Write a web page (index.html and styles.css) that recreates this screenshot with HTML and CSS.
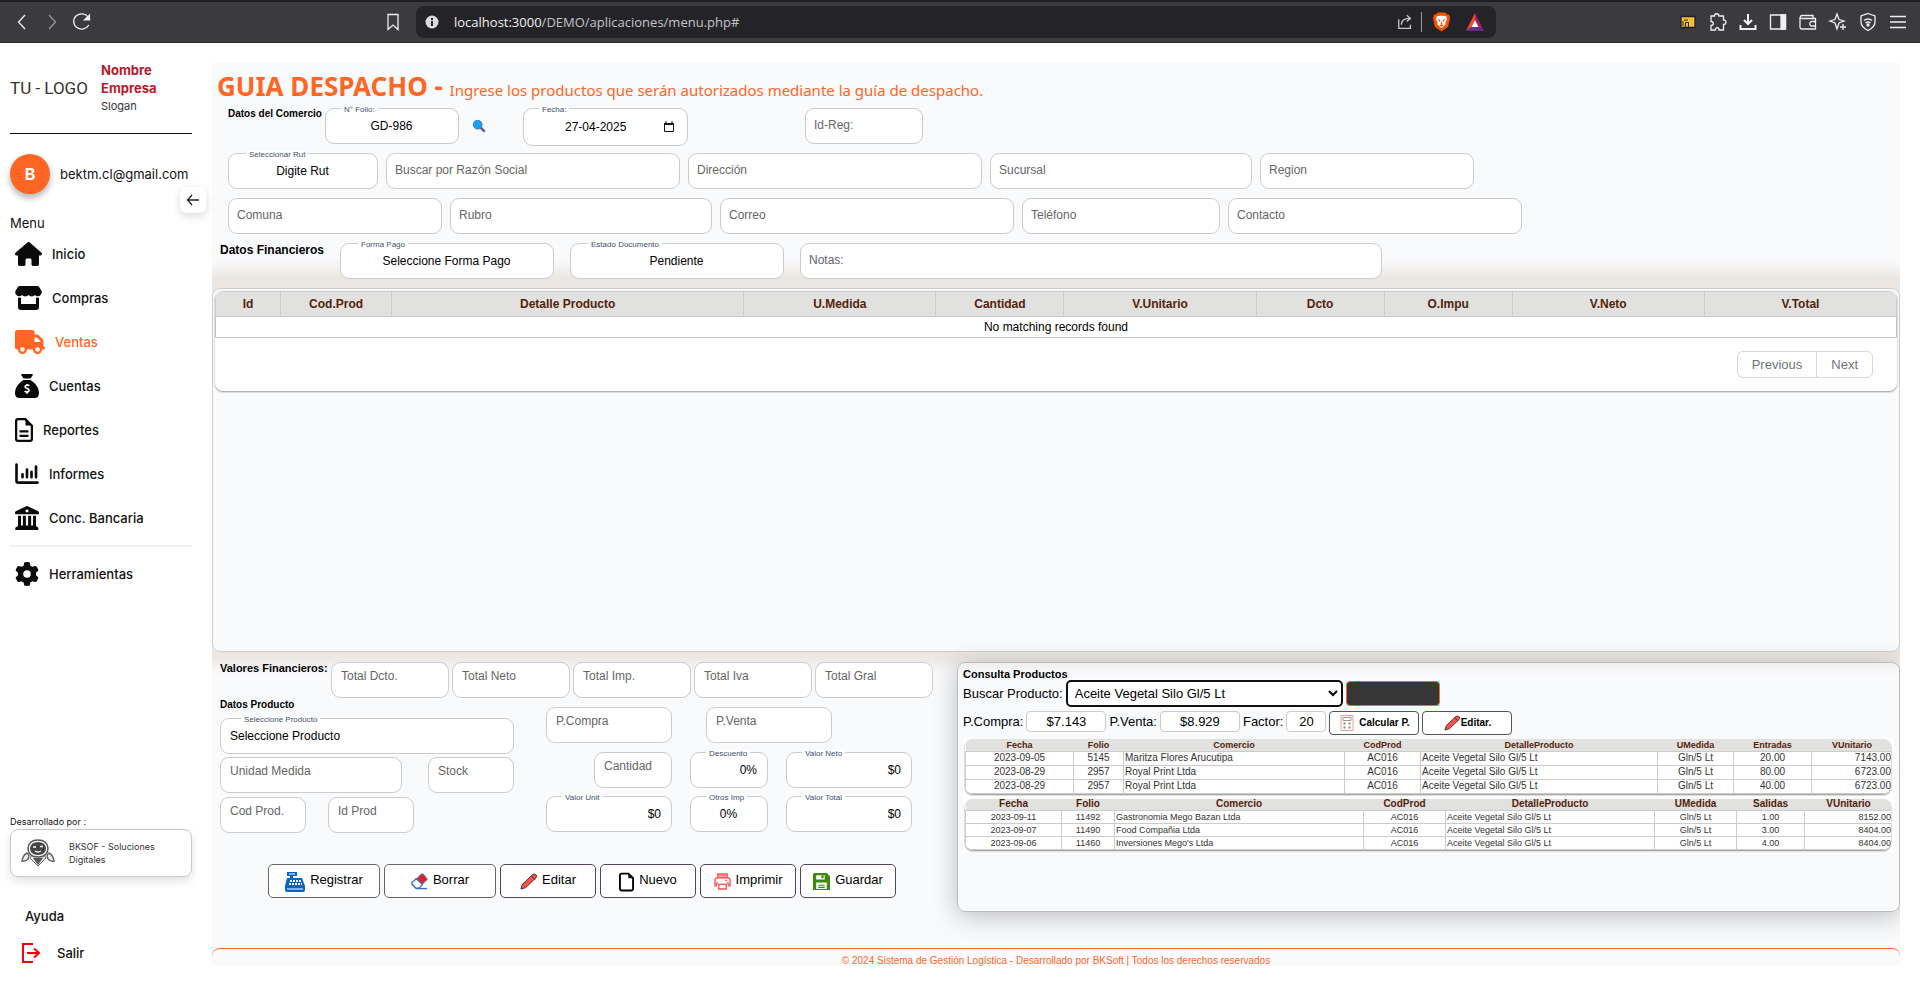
FILE: index.html
```html
<!doctype html>
<html lang="es">

	<head>
		<title>Guia Despacho</title>
		<meta charset="utf-8" />
		<link rel="stylesheet" href="styles.css">
	</head>

	<body>

		<header class="topbar">
			<button type="button" aria-label="Atrás"><svg viewBox="0 0 20 20"><path d="M13 3L6.500 10L13 17" /></svg></button>
			<button type="button" class="dim" aria-label="Adelante"><svg viewBox="0 0 20 20"><path d="M7 3L13.500 10L7 17" /></svg></button>
			<button type="button" aria-label="Recargar"><svg viewBox="0 0 20 20"><path d="M16.500 5.500A8 7.600 0 1 0 16.800 13" /><path d="M12.500 7.800h5V3z" class="fill" /></svg></button>
			<button type="button" class="bookmark" aria-label="Marcador"><svg viewBox="0 0 20 20"><path d="M5 2.500h10v15l-5-4.500l-5 4.500z" /></svg></button>
			<div class="urlbar">
				<svg class="info" viewBox="0 0 14 14"><circle cx="7" cy="7" r="6.500" /><path d="M6 6h2v5H6zM6 3h2v2H6z" class="hole" /></svg>
				<span class="url">localhost:3000<span>/DEMO/aplicaciones/menu.php#</span></span>
				<svg class="share" viewBox="0 0 20 20"><path d="M3 7v10h13v-4M6 13c0-5 3-7 9-7M12 2.500L16 6L12 9.500" /></svg>
				<i class="sep"></i>
				<svg class="brave" viewBox="0 0 18 20"><path d="M5 0h8l2 2h2l1 4l-2 9l-7 5l-7-5L0 6l1-4h2z" fill="#ff5000" /><path d="M4 4l3-.5h4l3 .500l1 3l-2 3.500l.5 2l-4.500 4l-4.500-4l.5-2L3 7z" fill="#fff" /><path d="M5 7l3 1l-1 2zM13 7l-3 1l1 2zM9 9l1 3H8zM6.500 13.500L9 12.500l2.500 1L9 15z" fill="#ff5000" /></svg>
				<svg class="bat" viewBox="0 0 18 18"><path d="M9 0L0 18l5.500-4L9 7z" fill="#ff4724" /><path d="M9 0l9 18l-5.500-4L9 7z" fill="#9e1f63" /><path d="M0 18h18l-5.500-4h-7z" fill="#662d91" /><path d="M9 7l3.500 7h-7z" fill="#fff" /></svg>
			</div>
			<button type="button" aria-label="Extensión"><svg viewBox="0 0 20 20"><path d="M3 4.500h14v11H3z" fill="#f2c230" stroke="#222" /><path d="M5 14V9M7.500 15v-4.500h3V15M6 8h4" stroke="#222" stroke-width="1" /></svg></button>
			<button type="button" aria-label="Extensiones"><svg viewBox="0 0 20 20"><path d="M3 4h3.500c-.5-2.500 4-3.500 4.500 0h4.500v4c3-.500 3.500 4.500 0 4.500V18H11c.5-3-4-3-3.500 0H3v-4.500c3 0 3-4 0-4z" /></svg></button>
			<button type="button" aria-label="Descargas"><svg viewBox="0 0 20 20" class="bold"><path d="M10 2v9M6 8l4 4l4-4M2.500 13v4h15v-4" /></svg></button>
			<button type="button" aria-label="Panel lateral"><svg viewBox="0 0 20 20"><path d="M2.500 3h15v14h-15z" /><path d="M13 3h4.500v14H13z" class="fill" /></svg></button>
			<button type="button" aria-label="Cartera"><svg viewBox="0 0 20 20"><path d="M15 6V3.500H4C1.500 4 2 6.500 4 6.500h13.500V17H4q-2 0-2-2V5M17.500 9.500H13q-2.500 2 0 4.500h4.500" /></svg></button>
			<button type="button" aria-label="Leo"><svg viewBox="0 0 20 20"><path d="M9 2l2 5.500L16 9l-5 2l-2 6l-2-6l-5-2l5-1.500zM15 12v6M12 15h6" /></svg></button>
			<button type="button" aria-label="VPN"><svg viewBox="0 0 20 20"><path d="M10 1.500L17 4v6c0 4-3 6.500-7 8.500C6 16.500 3 14 3 10V4zM6 8.500q4-3 8 0M7.500 11q2.500-2 5 0" /><circle cx="10" cy="13" r="1" class="fill" /></svg></button>
			<button type="button" aria-label="Menú"><svg viewBox="0 0 20 20"><path d="M2 4.500h16M2 10h16M2 15.500h16" /></svg></button>
		</header>

		<div class="layout">

			<nav class="sidebar">
				<div class="brand">
					<span class="logo">TU - LOGO</span>
					<p>
						<strong>Nombre Empresa</strong>
						<small>Slogan</small>
					</p>
				</div>
				<div class="user">
					<span class="avatar">B</span>
					<span>bektm.cl@gmail.com</span>
					<button type="button" class="toggle" aria-label="Ocultar menú"><svg viewBox="0 0 14 14"><path d="M13 7H1.500M6 2L1.500 7L6 12" /></svg></button>
				</div>
				<p class="menu-title">Menu</p>
				<ul class="menu">
					<li><a href="#"><svg viewBox="0 0 576 512"><path d="M575.8 255.5c0 18-15 32.100-32 32.100h-32l.7 160.200c0 2.700-.2 5.400-.5 8.100V472c0 22.100-17.900 40-40 40H392c-22.100 0-40-17.900-40-40V384c0-17.700-14.300-32-32-32H256c-17.700 0-32 14.300-32 32v88c0 22.100-17.900 40-40 40H104c-22.100 0-40-17.900-40-40V287.600H32c-18 0-32-14-32-32.100c0-9 3-17 10-24L266.400 8c7-7 15-8 22-8s15 2 21 7L564.800 231.500c8 7 12 15 11 24z" /></svg>Inicio</a></li>
					<li><a href="#"><svg viewBox="0 0 576 512"><path d="M92 0h392q18 0 28 16l48 78c38 62-20 132-80 126q-32-4-54-28q-26 30-69 30t-69-30q-26 30-69 30t-69-30q-22 24-54 28C36 226-22 156 16 94l48-78Q74 0 92 0z" /><path d="M64 246q32 10 64-2v140h320V244q32 12 64 2v202q0 64-64 64H128q-64 0-64-64z" /></svg>Compras</a></li>
					<li><a href="#" class="active"><svg viewBox="0 0 640 512"><path d="M48 0C21.500 0 0 21.500 0 48V368c0 26.500 21.500 48 48 48H64c0 53 43 96 96 96s96-43 96-96H384c0 53 43 96 96 96s96-43 96-96h32c17.700 0 32-14.300 32-32s-14.300-32-32-32V237.300c0-17-6.700-33.300-18.700-45.300L512 114.700c-12-12-28.300-18.700-45.300-18.700H416V48c0-26.500-21.500-48-48-48H48zM416 160h50.700L544 237.300V256H416V160zM112 416a48 48 0 1 1 96 0 48 48 0 1 1 -96 0zm368-48a48 48 0 1 1 0 96 48 48 0 1 1 0-96z" /></svg>Ventas</a></li>
					<li><a href="#"><svg viewBox="0 0 512 512"><path d="M144 0h224q20 8 10 26l-48 70H182l-48-70q-10-18 10-26zM182 128h148c24 16 182 110 182 280q0 104-104 104H104Q0 512 0 408C0 238 158 144 182 128z" /><path d="M306 248c-20-14-86-22-90 20c-4 48 88 28 84 80c-4 44-70 38-96 18M256 212v36M256 384v36" class="cut" /></svg>Cuentas</a></li>
					<li><a href="#"><svg viewBox="0 0 384 512"><path d="M64 24h156l140 140v284q0 40-40 40H64q-40 0-40-40V64q0-40 40-40z" class="sheet-line" /><path d="M224 10v150h150zM96 260h192v48H96zM96 356h192v48H96z" /></svg>Reportes</a></li>
					<li><a href="#"><svg viewBox="0 0 512 512"><path d="M32 56v344q0 40 40 40h408" class="line" /><path d="M160 260v64M256 160v164M352 208v116M448 96v228" class="line" /></svg>Informes</a></li>
					<li><a href="#"><svg viewBox="0 0 512 512"><path d="M240 4q16-7 32 0l224 108q16 8 16 24v24q0 16-16 16H16q-16 0-16-16v-24q0-16 16-24zM256 72a32 32 0 1 0 1 0zM64 208h64v208h40V208h64v208h48V208h64v208h40V208h64v216l44 36q12 12 4 52H8q-8-36 4-52l52-36z" /></svg>Conc. Bancaria</a></li>
					<li class="tools"><a href="#"><svg viewBox="0 0 512 512"><path d="M495.900 166.600c3.200 8.700 .5 18.400-6.400 24.600l-43.300 39.400c1.100 8.300 1.700 16.800 1.700 25.400s-.6 17.100-1.700 25.400l43.300 39.400c6.900 6.200 9.600 15.900 6.400 24.600c-4.400 11.900-9.700 23.300-15.800 34.300l-4.700 8.100c-6.600 11-14 21.400-22.100 31.200c-5.900 7.200-15.700 9.600-24.500 6.800l-55.700-17.700c-13.400 10.300-28.200 18.900-44 25.400l-12.500 57.100c-2 9.100-9 16.300-18.200 17.800c-13.800 2.300-28 3.500-42.500 3.500s-28.700-1.200-42.500-3.500c-9.200-1.500-16.200-8.700-18.200-17.800l-12.500-57.100c-15.800-6.500-30.600-15.100-44-25.400L83.100 425.900c-8.800 2.800-18.600 .3-24.500-6.800c-8.100-9.800-15.500-20.200-22.100-31.200l-4.700-8.100c-6.100-11-11.400-22.400-15.800-34.300c-3.200-8.700-.5-18.400 6.400-24.600l43.300-39.400C64.600 273.100 64 264.600 64 256s.6-17.100 1.700-25.400L22.400 191.200c-6.900-6.200-9.600-15.900-6.400-24.600c4.400-11.900 9.700-23.300 15.800-34.300l4.700-8.100c6.600-11 14-21.400 22.100-31.200c5.900-7.200 15.700-9.600 24.500-6.800l55.700 17.700c13.400-10.300 28.200-18.900 44-25.400l12.500-57.100c2-9.100 9-16.300 18.200-17.800C227.300 1.200 241.500 0 256 0s28.700 1.200 42.500 3.500c9.200 1.500 16.200 8.700 18.200 17.800l12.500 57.100c15.800 6.500 30.600 15.100 44 25.400l55.700-17.700c8.800-2.800 18.600-.3 24.500 6.800c8.100 9.800 15.500 20.200 22.100 31.200l4.700 8.100c6.100 11 11.400 22.400 15.800 34.300zM256 336a80 80 0 1 0 0-160 80 80 0 1 0 0 160z" /></svg>Herramientas</a></li>
				</ul>

				<div class="side-foot">
					<p class="by">Desarrollado por :</p>
					<a href="#" class="dev">
						<svg viewBox="0 0 34 28">
							<path d="M11 16l-2 3l8 8l8-8l-2-3z" fill="#eee" stroke="#666" />
							<path d="M12 19h10l-5 7z" fill="#555" />
							<path d="M7 9Q8 1 17 1T27 9Q27 18 17 18T7 9z" fill="#fff" stroke="#555" stroke-width="1.500" />
							<path d="M9 9q1-6 8-6t8 6q0 7-8 7t-8-7z" fill="#444" />
							<path d="M12 8h3M19 7.500h3M14 12q3 2 6 0" stroke="#fff" stroke-width="1.500" fill="none" />
							<path d="M6 14q-4 2-5 8q3 1 6-2q2-4-1-6zM28 14q4 2 5 8q-3 1-6-2q-2-4 1-6z" fill="#eee" stroke="#666" stroke-width="1.500" />
						</svg>
						<span>BKSOF - Soluciones Digitales</span>
					</a>
					<a href="#" class="help">Ayuda</a>
					<a href="#" class="exit"><svg viewBox="0 0 18 20"><path d="M11 1H1v18h10M5 10h12M12 5.500L17 10L12 14.500" /></svg>Salir</a>
				</div>
			</nav>

			<main class="main">
				<h1>GUIA DESPACHO - <span>Ingrese los productos que serán autorizados mediante la guía de despacho.</span></h1>

				<form class="head">
					<div class="row">
						<b class="tag-commerce">Datos del Comercio</b>
						<div class="field w134"><label for="folio">N° Folio:</label><input id="folio" class="center" value="GD-986"></div>
						<button type="button" class="search" aria-label="Buscar folio"><svg viewBox="0 0 16 16"><path d="M9 9l5.500 5.500" stroke="#5b5ea6" stroke-width="3" /><circle cx="6.500" cy="6.500" r="5" fill="#12a5f4" stroke="#3c6fc4" /></svg></button>
						<div class="field w165 date"><label for="fecha">Fecha:</label><input id="fecha" value="27-04-2025"><svg viewBox="0 0 12 12"><path d="M1.500 2.500h9v8h-9z" /><path d="M1 2h10v2H1zM2.500 0h1v2h-1zM8.500 0h1v2h-1z" class="fill" /></svg></div>
						<div class="field w118 reg"><input aria-label="Id-Reg" placeholder="Id-Reg:"></div>
					</div>
					<div class="row">
						<div class="field w150"><label for="rut">Seleccionar Rut</label><select id="rut" class="center"><option>Digite Rut</option></select></div>
						<div class="field w294"><input aria-label="Razón Social" placeholder="Buscar por Razón Social"></div>
						<div class="field w294"><input aria-label="Dirección" placeholder="Dirección"></div>
						<div class="field w262"><input aria-label="Sucursal" placeholder="Sucursal"></div>
						<div class="field w214"><input aria-label="Region" placeholder="Region"></div>
					</div>
					<div class="row">
						<div class="field w214"><input aria-label="Comuna" placeholder="Comuna"></div>
						<div class="field w262"><input aria-label="Rubro" placeholder="Rubro"></div>
						<div class="field w294"><input aria-label="Correo" placeholder="Correo"></div>
						<div class="field w198"><input aria-label="Teléfono" placeholder="Teléfono"></div>
						<div class="field w294"><input aria-label="Contacto" placeholder="Contacto"></div>
					</div>
					<div class="row pay">
						<b class="tag-finance">Datos Financieros</b>
						<div class="field w214"><label for="forma">Forma Pago</label><select id="forma" class="center"><option>Seleccione Forma Pago</option></select></div>
						<div class="field w214"><label for="estado">Estado Documento</label><select id="estado" class="center"><option>Pendiente</option></select></div>
						<div class="field w582"><input aria-label="Notas" placeholder="Notas:"></div>
					</div>
				</form>

				<section class="detail">
					<div class="detail-card">
						<table>
							<colgroup>
								<col class="c4"><col class="c7"><col class="c21"><col class="c12"><col class="c8"><col class="c12"><col class="c8"><col class="c8"><col class="c12"><col class="c12">
							</colgroup>
							<thead>
								<tr><th>Id</th><th>Cod.Prod</th><th>Detalle Producto</th><th>U.Medida</th><th>Cantidad</th><th>V.Unitario</th><th>Dcto</th><th>O.Impu</th><th>V.Neto</th><th>V.Total</th></tr>
							</thead>
							<tbody>
								<tr><td colspan="10">No matching records found</td></tr>
							</tbody>
						</table>
						<div class="pager">
							<button type="button">Previous</button><button type="button">Next</button>
						</div>
					</div>
				</section>

				<div class="bottom">
					<form class="product">
						<div class="totals">
							<b>Valores Financieros:</b>
							<div class="field w118"><input aria-label="Total Dcto" placeholder="Total Dcto."></div>
							<div class="field w118"><input aria-label="Total Neto" placeholder="Total Neto"></div>
							<div class="field w118"><input aria-label="Total Imp" placeholder="Total Imp."></div>
							<div class="field w118"><input aria-label="Total Iva" placeholder="Total Iva"></div>
							<div class="field w118"><input aria-label="Total Gral" placeholder="Total Gral"></div>
						</div>
						<div class="product-cols">
							<div class="item">
								<b>Datos Producto</b>
								<div class="field wide"><label for="producto">Seleccione Producto</label><select id="producto"><option>Seleccione Producto</option></select></div>
								<div class="line between">
									<div class="field w182"><input aria-label="Unidad Medida" placeholder="Unidad Medida"></div>
									<div class="field w86"><input aria-label="Stock" placeholder="Stock"></div>
								</div>
								<div class="line codes">
									<div class="field w86"><input aria-label="Cod Prod" placeholder="Cod Prod."></div>
									<div class="field w86"><input aria-label="Id Prod" placeholder="Id Prod"></div>
								</div>
							</div>
							<div class="prices">
								<div class="line buy">
									<div class="field w126"><input aria-label="P.Compra" placeholder="P.Compra"></div>
									<div class="field w126"><input aria-label="P.Venta" placeholder="P.Venta"></div>
								</div>
								<div class="line end">
									<div class="field w78"><input aria-label="Cantidad" placeholder="Cantidad"></div>
									<div class="field w78"><label for="desc">Descuento</label><input id="desc" class="right" value="0%"></div>
									<div class="field w126"><label for="neto">Valor Neto</label><input id="neto" class="right" value="$0"></div>
								</div>
								<div class="line end">
									<div class="field w126"><label for="unit">Valor Unit</label><input id="unit" class="right" value="$0"></div>
									<div class="field w78"><label for="otros">Otros Imp</label><input id="otros" class="center" value="0%"></div>
									<div class="field w126"><label for="total">Valor Total</label><input id="total" class="right" value="$0"></div>
								</div>
							</div>
						</div>
						<div class="actions">
							<button type="button" class="big"><svg class="till" viewBox="0 0 20 20"><path d="M2 0h10v4H8v2h9l3 8v4q0 2-2 2H2q-2 0-2-2v-4L2 6h3V4H2z" fill="#0a63c9" /><path d="M4 2h6M2 17h16" stroke="#fff" fill="none" /><path d="M5 9h11M4 12h13" stroke="#fff" stroke-width="2" stroke-dasharray="2 1" fill="none" /></svg>Registrar</button>
							<button type="button" class="big"><svg viewBox="0 0 18 18"><path d="M6 6l5-5h2l4 5v1l-5 5z" fill="#e02424" stroke="#3b82e0" /><path d="M5.500 6L12 12l-3 4H5l-4-4v-2z" fill="#fff" stroke="#3b6fd0" stroke-width="1.500" /><path d="M5 16.500h12" stroke="#3b6fd0" stroke-width="1.500" /></svg>Borrar</button>
							<button type="button"><svg viewBox="0 0 18 18"><path d="M1 17l1.500-5L13 2q2-2 4 0t0 3L6 15.500z" fill="#f4534e" stroke="#55282c" /><path d="M12 3l4 4" stroke="#55282c" /></svg>Editar</button>
							<button type="button"><svg class="doc" viewBox="0 0 16 20"><path d="M10 1H3Q1 1 1 3v14q0 2 2 2h10q2 0 2-2V6z" fill="#fff" stroke="#000" stroke-width="2" /><path d="M10 0v6h6z" /></svg>Nuevo</button>
							<button type="button"><svg viewBox="0 0 18 18"><path d="M4 5V1h10v4M3 13.500H1V8q0-3 3-3h10q3 0 3 3v5.500h-2M5 12h8v5H5zM5 3h8M12 8h2M4 10q-2 1-1 3M14 10q2 1 1 3" fill="none" stroke="#ff5555" stroke-width="1.500" /></svg>Imprimir</button>
							<button type="button"><svg viewBox="0 0 16 16"><path d="M1 0h12l3 3v13H0V1z" fill="#3f8a0d" /><path d="M3 2h8v4H3zM3 9h10v6H3z" fill="#fff" /><path d="M8 2h2v3H8zM5 11h6v1H5zM5 13h6v1H5z" fill="#3f8a0d" /></svg>Guardar</button>
						</div>
					</form>

					<section class="query">
						<h2>Consulta Productos</h2>
						<div class="query-row">
							<label for="buscar">Buscar Producto:</label>
							<select id="buscar"><option>Aceite Vegetal Silo Gl/5 Lt</option></select>
							<button type="button" class="dark" aria-label="Consultar"></button>
						</div>
						<div class="query-row second">
							<label for="pcompra">P.Compra:</label>
							<input id="pcompra" value="$7.143">
							<label for="pventa">P.Venta:</label>
							<input id="pventa" value="$8.929">
							<label for="factor">Factor:</label>
							<input id="factor" class="short" value="20">
							<button type="button"><svg class="calc" viewBox="0 0 13 16"><path d="M.5.500h12v15H.5z" fill="#fff" stroke="#f59a9a" /><path d="M2.500 2.500h8v3h-8z" fill="#fff" stroke="#999" /><path d="M3 8.500h2M8 8.500h2M3 12.500h2M8 12.500h2" stroke="#888" stroke-width="2" /></svg>Calcular P.</button>
							<button type="button" class="edit"><svg viewBox="0 0 18 18"><path d="M1 17l1.500-5L13 2q2-2 4 0t0 3L6 15.500z" fill="#f4534e" stroke="#55282c" /><path d="M12 3l4 4" stroke="#55282c" /></svg>Editar.</button>
						</div>
						<div class="moves">
							<div class="sheet in">
								<table>
									<thead>
										<tr><th>Fecha</th><th>Folio</th><th>Comercio</th><th>CodProd</th><th>DetalleProducto</th><th>UMedida</th><th>Entradas</th><th>VUnitario</th></tr>
									</thead>
									<tbody>
										<tr><td>2023-09-05</td><td>5145</td><td>Maritza Flores Arucutipa</td><td>AC016</td><td>Aceite Vegetal Silo Gl/5 Lt</td><td>Gln/5 Lt</td><td>20.00</td><td>7143.00</td></tr>
										<tr><td>2023-08-29</td><td>2957</td><td>Royal Print Ltda</td><td>AC016</td><td>Aceite Vegetal Silo Gl/5 Lt</td><td>Gln/5 Lt</td><td>80.00</td><td>6723.00</td></tr>
										<tr><td>2023-08-29</td><td>2957</td><td>Royal Print Ltda</td><td>AC016</td><td>Aceite Vegetal Silo Gl/5 Lt</td><td>Gln/5 Lt</td><td>40.00</td><td>6723.00</td></tr>
									</tbody>
								</table>
							</div>
							<div class="sheet out">
								<table>
									<thead>
										<tr><th>Fecha</th><th>Folio</th><th>Comercio</th><th>CodProd</th><th>DetalleProducto</th><th>UMedida</th><th>Salidas</th><th>VUnitario</th></tr>
									</thead>
									<tbody>
										<tr><td>2023-09-11</td><td>11492</td><td>Gastronomia Mego Bazan Ltda</td><td>AC016</td><td>Aceite Vegetal Silo Gl/5 Lt</td><td>Gln/5 Lt</td><td>1.00</td><td>8152.00</td></tr>
										<tr><td>2023-09-07</td><td>11490</td><td>Food Compañia Ltda</td><td>AC016</td><td>Aceite Vegetal Silo Gl/5 Lt</td><td>Gln/5 Lt</td><td>3.00</td><td>8404.00</td></tr>
										<tr><td>2023-09-06</td><td>11460</td><td>Inversiones Mego's Ltda</td><td>AC016</td><td>Aceite Vegetal Silo Gl/5 Lt</td><td>Gln/5 Lt</td><td>4.00</td><td>8404.00</td></tr>
									</tbody>
								</table>
							</div>
						</div>
					</section>
				</div>

				<footer>© 2024 Sistema de Gestión Logística - Desarrollado por BKSoft | Todos los derechos reservados</footer>
			</main>

		</div>

	</body>

</html>
```
FILE: styles.css
```css
* {
	box-sizing: border-box;
}

body {
	margin: 0;
	min-height: 100vh;
	display: flex;
	flex-direction: column;
	background: #fff;
	font: 12px/16px "Liberation Sans", sans-serif;
	color: #000;
}

p, h1, h2, ul {
	margin: 0;
	padding: 0;
}

button, input, select {
	font: inherit;
	color: inherit;
	margin: 0;
}

a {
	color: inherit;
	text-decoration: none;
}

/* browser bar */
.topbar {
	height: 43px;
	display: flex;
	align-items: center;
	gap: 10px;
	padding: 0 12px;
	background: #3b3a3f;
	border-top: 2px solid #202024;
	border-bottom: 1px solid #2b2a2f;
}

.topbar button {
	width: 20px;
	height: 20px;
	padding: 0;
	border: 0;
	background: none;
	flex: none;
}

.topbar button svg {
	display: block;
	width: 20px;
	height: 20px;
	fill: none;
	stroke: #f0f0f2;
	stroke-width: 1.3;
}

.topbar button .bold {
	stroke-width: 2;
}

.topbar .fill {
	fill: #f0f0f2;
}

.topbar .dim {
	opacity: 0.5;
}

.topbar .bookmark {
	margin-left: 281px;
}

.urlbar {
	flex: 1;
	height: 32px;
	margin: 0 172px 0 3px;
	padding: 0 12px 0 9px;
	display: flex;
	align-items: center;
	background: #242328;
	border-radius: 8px;
}

.urlbar svg {
	flex: none;
}

.info {
	width: 14px;
	height: 14px;
	margin-right: 15px;
	fill: #dcdce0;
}

.info .hole {
	fill: #242328;
}

.url {
	flex: 1;
	font: 13px/20px "Open Sans", sans-serif;
	color: #f2f2f4;
}

.url span {
	color: #c4c4ca;
}

.share {
	width: 18px;
	height: 18px;
	fill: none;
	stroke: #c4c4ca;
	stroke-width: 1.5;
}

.sep {
	width: 1px;
	height: 20px;
	margin: 0 11px 0 7px;
	background: #9a9aa0;
}

.brave {
	width: 17px;
	height: 20px;
	margin-right: 16px;
}

.bat {
	width: 18px;
	height: 18px;
}

.layout {
	flex: 1;
	display: flex;
}

/* sidebar */
.sidebar {
	width: 212px;
	flex: none;
	display: flex;
	flex-direction: column;
	padding: 20px 20px 31px 10px;
	font: 13px/18px Inter, sans-serif;
	color: #111;
}

.brand {
	display: flex;
	align-items: center;
	height: 71px;
	padding-bottom: 20px;
	border-bottom: 1px solid #111;
}

.logo {
	width: 91px;
	font: 17px/20px Roboto, sans-serif;
	color: #333;
}

.brand p {
	width: 70px;
}

.brand strong {
	display: block;
	color: #b8182c;
}

.brand small {
	display: block;
	font-size: 11px;
	color: #333;
}

.user {
	position: relative;
	display: flex;
	align-items: center;
	gap: 10px;
	margin-top: 20px;
}

.avatar {
	width: 40px;
	height: 40px;
	flex: none;
	border-radius: 50%;
	background: #ff6624;
	box-shadow: 0 4px 6px rgba(0, 0, 0, 0.3);
	color: #fff;
	font: bold 16px/40px Inter, sans-serif;
	text-align: center;
}

/* hangs over the border between sidebar and content */
.toggle {
	position: absolute;
	right: -14px;
	top: 33px;
	width: 26px;
	height: 26px;
	padding: 6px;
	border: 0;
	border-radius: 6px;
	background: #fff;
	box-shadow: 0 3px 8px rgba(0, 0, 0, 0.15);
}

.toggle svg {
	display: block;
	width: 14px;
	height: 14px;
	fill: none;
	stroke: #222;
	stroke-width: 1.3;
}

.menu-title {
	margin-top: 20px;
}

.menu {
	list-style: none;
}

.menu a {
	display: flex;
	align-items: center;
	gap: 10px;
	height: 44px;
	padding-left: 5px;
	font-weight: 500;
}

.menu svg {
	height: 24px;
	fill: #0a0a0a;
}

.menu .active {
	color: #ff6624;
}

.menu .active svg {
	fill: #ff6624;
}

.menu .cut {
	fill: none;
	stroke: #fff;
	stroke-width: 36;
}

.menu .line {
	fill: none;
	stroke: #0a0a0a;
	stroke-width: 56;
	stroke-linecap: round;
}

.menu .sheet-line {
	fill: none;
	stroke: #0a0a0a;
	stroke-width: 48;
}

.menu .tools {
	margin-top: 5px;
	padding-top: 5px;
	border-top: 2px solid #f2f2f2;
}

.side-foot {
	margin-top: auto;
	font-weight: 500;
}

.by {
	font: 9px/14px Inter, sans-serif;
}

.dev {
	display: flex;
	align-items: center;
	gap: 14px;
	height: 48px;
	padding: 0 10px;
	border: 1px solid #c8c8c8;
	border-radius: 8px;
	box-shadow: 0 4px 8px rgba(0, 0, 0, 0.12);
	font: 9px/13px Inter, sans-serif;
	color: #333;
}

.dev svg {
	width: 34px;
	height: 28px;
	flex: none;
}

.help {
	display: block;
	margin: 30px 0 0 15px;
}

.exit {
	display: flex;
	align-items: center;
	gap: 17px;
	margin: 18px 0 0 12px;
}

.exit svg {
	width: 18px;
	height: 20px;
	fill: none;
	stroke: #f00;
	stroke-width: 2;
}

/* content */
.main {
	flex: 1;
	min-width: 0;
	display: flex;
	flex-direction: column;
	margin: 20px 20px 28px 0;
	background: #f9fafc;
	overflow: hidden;
}

h1 {
	height: 45px;
	padding: 7px 5px 0;
	font: bold 26px/32px "Noto Sans", sans-serif;
	color: #ff6624;
}

h1 span {
	font-weight: normal;
	font-size: 15px;
}

.head {
	display: flex;
	flex-direction: column;
	gap: 9px;
}

.row {
	display: flex;
	gap: 8px;
	height: 36px;
	padding-left: 16px;
}

.row:first-child {
	gap: 0;
}

.pay {
	gap: 16px;
	padding-left: 8px;
}

.tag-commerce {
	width: 97px;
	font-size: 10px;
	line-height: 12px;
	white-space: nowrap;
}

.tag-finance {
	width: 104px;
	line-height: 14px;
	white-space: nowrap;
}

.search {
	width: 16px;
	margin: 0 35px 0 13px;
	padding: 0;
	border: 0;
	background: none;
}

.search svg {
	display: block;
	width: 14px;
	height: 14px;
}

.field {
	position: relative;
	height: 36px;
	flex: none;
}

.field input,
.field select {
	display: block;
	width: 100%;
	height: 100%;
	padding: 0 10px 0 9px;
	border: 1px solid #ccc;
	border-radius: 9px;
	background: #fff;
	appearance: none;
	outline: none;
}

.field input:placeholder-shown {
	padding: 0 8px 3px;
}

.bottom .field input:placeholder-shown {
	padding: 0 9px 8px;
}

.field input::placeholder {
	color: #666;
	opacity: 1;
}

/* small caption sitting on the border */
.field label {
	position: absolute;
	left: 16px;
	top: -2px;
	padding: 0 3px;
	background: #fff;
	border-radius: 3px;
	font-size: 8px;
	line-height: 8px;
	color: #44506a;
	white-space: nowrap;
}

.row .w150 label,
.row .w214 label {
	left: 18px;
}

.wide label {
	left: 21px;
}

.field .center {
	text-align: center;
	text-align-last: center;
}

.field .right {
	text-align: right;
}

.date {
	height: 38px;
}

.date input {
	padding-left: 41px;
}

.date svg {
	position: absolute;
	right: 13px;
	top: 13px;
	width: 12px;
	height: 12px;
	fill: none;
	stroke: #111;
}

.date .fill {
	fill: #111;
	stroke: none;
}

.reg {
	margin-left: 117px;
}

.w78 { width: 78px; }
.w86 { width: 86px; }
.w118 { width: 118px; }
.w126 { width: 126px; }
.w134 { width: 134px; }
.w150 { width: 150px; }
.w165 { width: 165px; }
.w182 { width: 182px; }
.w198 { width: 198px; }
.w214 { width: 214px; }
.w262 { width: 262px; }
.w294 { width: 294px; }
.w582 { width: 582px; }

table {
	width: 100%;
	border-collapse: collapse;
	table-layout: fixed;
}

th {
	background: #e1e1df;
	color: #54220a;
}

.detail {
	flex: 1;
	margin-top: 9px;
	padding: 2px;
	border: 1px solid #ccc;
	border-radius: 8px;
	box-shadow: 0 -3px 12px 16px #ebe6e2;
}

/* the rows above stay on top of the shadow */
.head, .product {
	position: relative;
	z-index: 1;
}

.detail-card {
	height: 100px;
	border-radius: 8px;
	background: #fff;
	box-shadow: 0 1px 2px #999;
	overflow: hidden;
}

.detail-card th {
	height: 25px;
	padding: 0;
	border: 1px solid #ccc;
}

.detail-card td {
	height: 21px;
	padding: 0;
	border: 1px solid #c4c4c4;
	line-height: 14px;
	text-align: center;
}

.c4 { width: 65px; }
.c7 { width: 111px; }
.c8 { width: 128px; }
.c12 { width: 192px; }
.c21 { width: 352px; }

.pager {
	display: flex;
	justify-content: flex-end;
	padding: 13px 24px;
}

.pager button {
	height: 27px;
	padding: 0 14px;
	border: 1px solid #d5d8dc;
	border-radius: 0 6px 6px 0;
	background: #fff;
	font-size: 13px;
	color: #6c757d;
}

.pager button:first-child {
	border-right: 0;
	border-radius: 6px 0 0 6px;
}

.bottom {
	display: flex;
	margin-top: 10px;
}

.product {
	width: 745px;
	flex: none;
	padding-left: 8px;
}

.totals {
	display: flex;
	gap: 3px;
}

.totals b {
	width: 108px;
	font-size: 11px;
	line-height: 13px;
	white-space: nowrap;
}

.product-cols {
	display: flex;
	gap: 32px;
}

.item {
	width: 294px;
}

.item b {
	display: block;
	height: 20px;
	font-size: 10px;
	line-height: 14px;
}

.line {
	display: flex;
	margin-top: 8px;
}

.item .line {
	margin-top: 3px;
}

.item .codes {
	gap: 22px;
	margin-top: 4px;
}

.between {
	justify-content: space-between;
}

.prices {
	width: 366px;
}

.prices .buy {
	gap: 34px;
	margin: 9px 0 9px;
}

.end {
	justify-content: flex-end;
	gap: 18px;
}

.actions {
	display: flex;
	gap: 4px;
	margin: 31px 0 0 48px;
}

.actions button {
	display: flex;
	align-items: center;
	justify-content: center;
	gap: 5px;
	width: 96px;
	height: 34px;
	padding: 0 0 2px;
	border: 1px solid #54435a;
	border-radius: 5px;
	background: #fff;
	font-size: 13px;
}

.actions .big {
	width: 112px;
	border-color: #666;
}

.actions svg {
	width: 17px;
	height: 17px;
	margin-top: 3px;
}

.actions .till {
	width: 20px;
	height: 20px;
}

.actions .doc {
	width: 15px;
	height: 20px;
}

/* product lookup */
.query {
	flex: 1;
	min-width: 0;
	min-height: 250px;
	margin-bottom: 36px;
	padding: 5px;
	border: 1px solid #bbb;
	border-radius: 8px;
	box-shadow: 0 4px 26px rgba(0, 0, 0, 0.25);
}

h2 {
	font-size: 11px;
	line-height: 12px;
}

.query-row {
	display: flex;
	align-items: center;
	gap: 3px;
	height: 27px;
	font-size: 13px;
}

.query-row.second {
	align-items: flex-start;
	height: 27px;
	margin-top: 4px;
}

.query-row label {
	line-height: 21px;
}

.query-row select {
	width: 277px;
	height: 27px;
	padding: 0 0 0 3px;
	border: 2px solid #111;
	border-radius: 5px;
	background: #fff;
}

.query-row input {
	width: 80px;
	height: 21px;
	padding: 0;
	border: 1px solid #ccc;
	border-radius: 4px;
	text-align: center;
}

.query-row .short {
	width: 40px;
}

.query-row button {
	display: flex;
	align-items: center;
	justify-content: center;
	gap: 4px;
	width: 90px;
	height: 24px;
	padding: 0;
	border: 1px solid #555;
	border-radius: 4px;
	background: #fff;
	font-size: 10px;
	font-weight: bold;
}

.query-row .edit {
	gap: 1px;
}

.query-row button.dark {
	width: 94px;
	height: 25px;
	border-color: #ff6624;
	background: #363636;
}

.query-row svg {
	width: 16px;
	height: 16px;
}

.moves {
	padding: 1px 3px 2px 2px;
	background: #fff;
}

.sheet {
	border-radius: 8px;
	overflow: hidden;
	box-shadow: 0 1px 2px #888;
	color: #333;
}

.sheet td {
	height: 14px;
	padding: 0 1px;
	border: 1px solid #ccc;
	font-size: 10px;
	line-height: 12px;
	text-align: center;
	white-space: nowrap;
}

.sheet th {
	height: 12px;
	padding: 0;
	font-size: 9px;
	line-height: 10px;
}

.sheet td:nth-child(3),
.sheet td:nth-child(5) {
	text-align: left;
}

.sheet td:last-child {
	text-align: right;
}

.in th:nth-child(1) { width: 108px; }
.in th:nth-child(2) { width: 50px; }
.in th:nth-child(3) { width: 221px; }
.in th:nth-child(4) { width: 76px; }
.in th:nth-child(5) { width: 237px; }
.in th:nth-child(6) { width: 76px; }
.in th:nth-child(7) { width: 78px; }
.in th:nth-child(8) { width: 81px; }

.out {
	margin-top: 5px;
}

.out td {
	height: 13px;
	font-size: 9px;
	line-height: 11px;
}

.out th {
	font-size: 10px;
}

.out th:nth-child(1) { width: 96px; }
.out th:nth-child(2) { width: 53px; }
.out th:nth-child(3) { width: 249px; }
.out th:nth-child(4) { width: 82px; }
.out th:nth-child(5) { width: 209px; }
.out th:nth-child(6) { width: 82px; }
.out th:nth-child(7) { width: 68px; }
.out th:nth-child(8) { width: 88px; }

footer {
	height: 18px;
	padding-top: 6px;
	border-top: 1px solid #ff6624;
	border-radius: 8px;
	font-size: 10px;
	line-height: 12px;
	color: #ff6624;
	text-align: center;
}
```
